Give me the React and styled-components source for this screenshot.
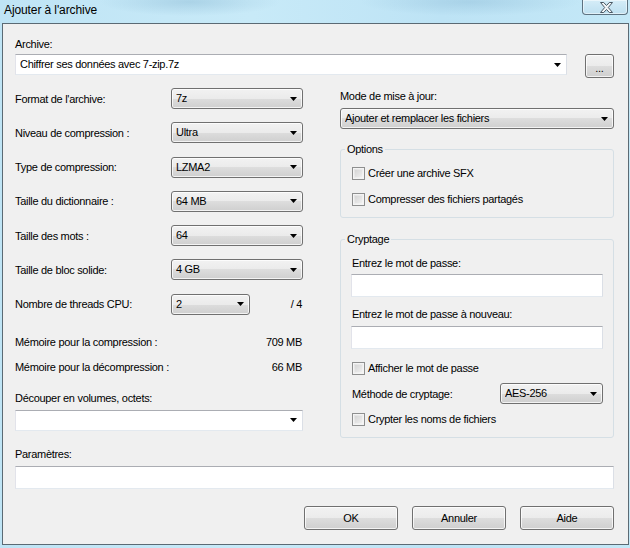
import React from 'react';
import styled, { createGlobalStyle } from 'styled-components';

const GlobalStyle = createGlobalStyle`
  html, body {
    margin: 0;
    padding: 0;
  }
  body {
    width: 630px;
    height: 548px;
    overflow: hidden;
    font-family: "Liberation Sans", Arial, sans-serif;
    font-size: 11px;
    letter-spacing: -0.3px;
    color: #000;
  }
`;

const aeroButton = `
  background: linear-gradient(#f2f2f2 0%, #ebebeb 50%, #dddddd 50%, #cfcfcf 100%);
  border: 1px solid #707070;
  border-radius: 3px;
  box-shadow: inset 0 0 0 1px rgba(255, 255, 255, 0.75);
`;

const Frame = styled.div`
  width: 630px;
  height: 548px;
  box-sizing: border-box;
  padding: 0 1px 3px 2px;
  display: flex;
  flex-direction: column;
  background:
    radial-gradient(ellipse 90px 14px at 190px 2px, rgba(120, 170, 200, 0.35), transparent),
    radial-gradient(ellipse 110px 14px at 470px 2px, rgba(120, 170, 200, 0.3), transparent),
    linear-gradient(90deg, #bfe4f5 0%, #c8eaf8 40%, #bde3f5 70%, #c4e8f7 100%);
`;

const TitleBar = styled.div`
  height: 23px;
  flex: none;
  display: flex;
  justify-content: space-between;
  align-items: flex-start;
`;

const Title = styled.div`
  padding: 3px 0 0 2px;
  font-size: 12px;
  line-height: 14px;
  letter-spacing: -0.1px;
  color: #000;
`;

const CloseButton = styled.div`
  width: 46px;
  height: 15px;
  box-sizing: border-box;
  margin-right: 1px;
  display: flex;
  align-items: center;
  justify-content: center;
  padding-left: 2px;
  border: 1px solid #5e7280;
  border-top: none;
  border-radius: 0 0 4px 4px;
  background: linear-gradient(#d6edf8 0%, #c9e6f4 50%, #bfe0f0 100%);
  box-shadow: inset 0 0 0 1px rgba(255, 255, 255, 0.5);
`;

const Client = styled.div`
  flex: 1;
  box-sizing: border-box;
  display: flex;
  flex-direction: column;
  padding: 14px 14px 0 12px;
  background: #f0f0f0;
  border: 1px solid #5b6a74;
`;

const Label = styled.div`
  line-height: 13px;
  white-space: nowrap;
  margin-top: ${p => p.$mt || 0}px;
`;

const ArchiveRow = styled.div`
  display: flex;
  justify-content: space-between;
  align-items: flex-start;
  margin-top: 3px;
`;

const Combo = styled.div`
  box-sizing: border-box;
  width: ${p => p.$width || '100%'};
  height: 21px;
  flex: none;
  display: flex;
  align-items: center;
  padding: 0 5px 0 4px;
  margin-top: ${p => p.$mt || 0}px;
  ${p => p.$editable
    ? `
      background: #fff;
      border: 1px solid;
      border-color: #abadb3 #dbdfe6 #e3e9ef #e2e3ea;
    `
    : aeroButton}
`;

const ComboText = styled.span`
  flex: 1;
  white-space: nowrap;
  overflow: hidden;
  line-height: 13px;
`;

const PushButton = styled.div`
  box-sizing: border-box;
  width: ${p => p.$w}px;
  height: 24px;
  display: flex;
  align-items: center;
  justify-content: center;
  padding-top: ${p => p.$dots ? 4 : 0}px;
  ${aeroButton}
`;

const Columns = styled.div`
  display: flex;
  justify-content: space-between;
  align-items: flex-start;
  margin-top: 10px;
`;

const LeftCol = styled.div`
  width: 288px;
  display: flex;
  flex-direction: column;
`;

const Settings = styled.div`
  display: flex;
  flex-direction: column;
  gap: 13.25px;
`;

const FieldRow = styled.div`
  display: grid;
  grid-template-columns: 156px ${p => p.$combo || 132}px 1fr;
  align-items: center;
  height: 21px;
`;

const RightText = styled.span`
  text-align: right;
  padding-right: 1px;
`;

const InfoRow = styled.div`
  display: flex;
  justify-content: space-between;
  line-height: 13px;
  margin-top: ${p => p.$mt || 0}px;
  padding-right: 1px;
`;

const RightCol = styled.div`
  width: 274px;
  display: flex;
  flex-direction: column;
`;

const Group = styled.fieldset`
  margin: ${p => p.$mt || 0}px 0 0;
  padding: ${p => p.$pt}px 10px ${p => p.$pb}px;
  border: 1px solid #d5dfe5;
  border-radius: 3px;
  min-width: 0;
  display: flex;
  flex-direction: column;
`;

const Legend = styled.legend`
  padding: 0 2px;
  margin-left: -6px;
  line-height: 13px;
`;

const CheckRow = styled.div`
  display: flex;
  align-items: center;
  gap: 3px;
  height: 13px;
  line-height: 13px;
  padding-left: 1px;
  margin-top: ${p => p.$mt || 0}px;
`;

const CheckBox = styled.span`
  width: 13px;
  height: 13px;
  box-sizing: border-box;
  flex: none;
  border: 1px solid #8e8f8f;
  background: linear-gradient(135deg, #cfcfcf 0%, #e4e4e4 55%, #f6f6f6 100%);
  box-shadow: inset 0 0 0 1px #f4f4f4, inset 0 0 0 2px rgba(255, 255, 255, 0.35);
`;

const TextBox = styled.div`
  box-sizing: border-box;
  height: 23px;
  margin-top: ${p => p.$mt || 0}px;
  background: #fff;
  border: 1px solid;
  border-color: #abadb3 #dbdfe6 #e3e9ef #e2e3ea;
`;

const MethodRow = styled.div`
  display: flex;
  justify-content: space-between;
  align-items: center;
  padding-left: 1px;
  margin-top: 8px;
`;

const ButtonBar = styled.div`
  display: flex;
  justify-content: flex-end;
  gap: 14px;
  margin-top: 17px;
`;

const Arrow = () => (
  <svg width="7" height="4" viewBox="0 0 7 4">
    <path d="M0 0h7L3.5 4z" fill="#000" />
  </svg>
);

const CloseGlyph = () => (
  <svg width="13" height="11" viewBox="0 0 13 11">
    <path
      d="M0.5 0.5h3.2l2.8 3 2.8-3h3.2l-4.2 5 4.2 5H9.3l-2.8-3-2.8 3H0.5l4.2-5z"
      fill="#f4f6f8"
      stroke="#4a5864"
      strokeWidth="1"
      strokeLinejoin="round"
    />
  </svg>
);

const settings = [
  ["Format de l'archive:", '7z'],
  ['Niveau de compression :', 'Ultra'],
  ['Type de compression:', 'LZMA2'],
  ['Taille du dictionnaire :', '64 MB'],
  ['Taille des mots :', '64'],
  ['Taille de bloc solide:', '4 GB'],
];

export default function App() {
  return (
    <>
      <GlobalStyle />
      <Frame>
        <TitleBar>
          <Title>Ajouter à l'archive</Title>
          <CloseButton>
            <CloseGlyph />
          </CloseButton>
        </TitleBar>
        <Client>
          <Label>Archive:</Label>
          <ArchiveRow>
            <Combo $editable $width="552px">
              <ComboText>Chiffrer ses données avec 7-zip.7z</ComboText>
              <Arrow />
            </Combo>
            <PushButton $w={29} $dots>...</PushButton>
          </ArchiveRow>

          <Columns>
            <LeftCol>
              <Settings>
                {settings.map(([label, value]) => (
                  <FieldRow key={label}>
                    <span>{label}</span>
                    <Combo>
                      <ComboText>{value}</ComboText>
                      <Arrow />
                    </Combo>
                  </FieldRow>
                ))}
                <FieldRow $combo={79}>
                  <span>Nombre de threads CPU:</span>
                  <Combo>
                    <ComboText>2</ComboText>
                    <Arrow />
                  </Combo>
                  <RightText>/ 4</RightText>
                </FieldRow>
              </Settings>
              <InfoRow $mt={21}>
                <span>Mémoire pour la compression :</span>
                <span>709 MB</span>
              </InfoRow>
              <InfoRow $mt={12}>
                <span>Mémoire pour la décompression :</span>
                <span>66 MB</span>
              </InfoRow>
              <Label $mt={18}>Découper en volumes, octets:</Label>
              <Combo $editable $mt={5}>
                <ComboText />
                <Arrow />
              </Combo>
            </LeftCol>

            <RightCol>
              <Label $mt={2}>Mode de mise à jour:</Label>
              <Combo $mt={5}>
                <ComboText>Ajouter et remplacer les fichiers</ComboText>
                <Arrow />
              </Combo>

              <Group $mt={14} $pt={11} $pb={11}>
                <Legend>Options</Legend>
                <CheckRow>
                  <CheckBox />
                  <span>Créer une archive SFX</span>
                </CheckRow>
                <CheckRow $mt={13}>
                  <CheckBox />
                  <span>Compresser des fichiers partagés</span>
                </CheckRow>
              </Group>

              <Group $mt={15} $pt={11} $pb={11}>
                <Legend>Cryptage</Legend>
                <Label style={{ paddingLeft: 1 }}>Entrez le mot de passe:</Label>
                <TextBox $mt={4} />
                <Label $mt={11} style={{ paddingLeft: 1 }}>Entrez le mot de passe à nouveau:</Label>
                <TextBox $mt={5} />
                <CheckRow $mt={13}>
                  <CheckBox />
                  <span>Afficher le mot de passe</span>
                </CheckRow>
                <MethodRow>
                  <span>Méthode de cryptage:</span>
                  <Combo $width="103px">
                    <ComboText>AES-256</ComboText>
                    <Arrow />
                  </Combo>
                </MethodRow>
                <CheckRow $mt={9}>
                  <CheckBox />
                  <span>Crypter les noms de fichiers</span>
                </CheckRow>
              </Group>
            </RightCol>
          </Columns>

          <Label $mt={10}>Paramètres:</Label>
          <TextBox $mt={5} />

          <ButtonBar>
            <PushButton $w={94}>OK</PushButton>
            <PushButton $w={94}>Annuler</PushButton>
            <PushButton $w={94}>Aide</PushButton>
          </ButtonBar>
        </Client>
      </Frame>
    </>
  );
}
